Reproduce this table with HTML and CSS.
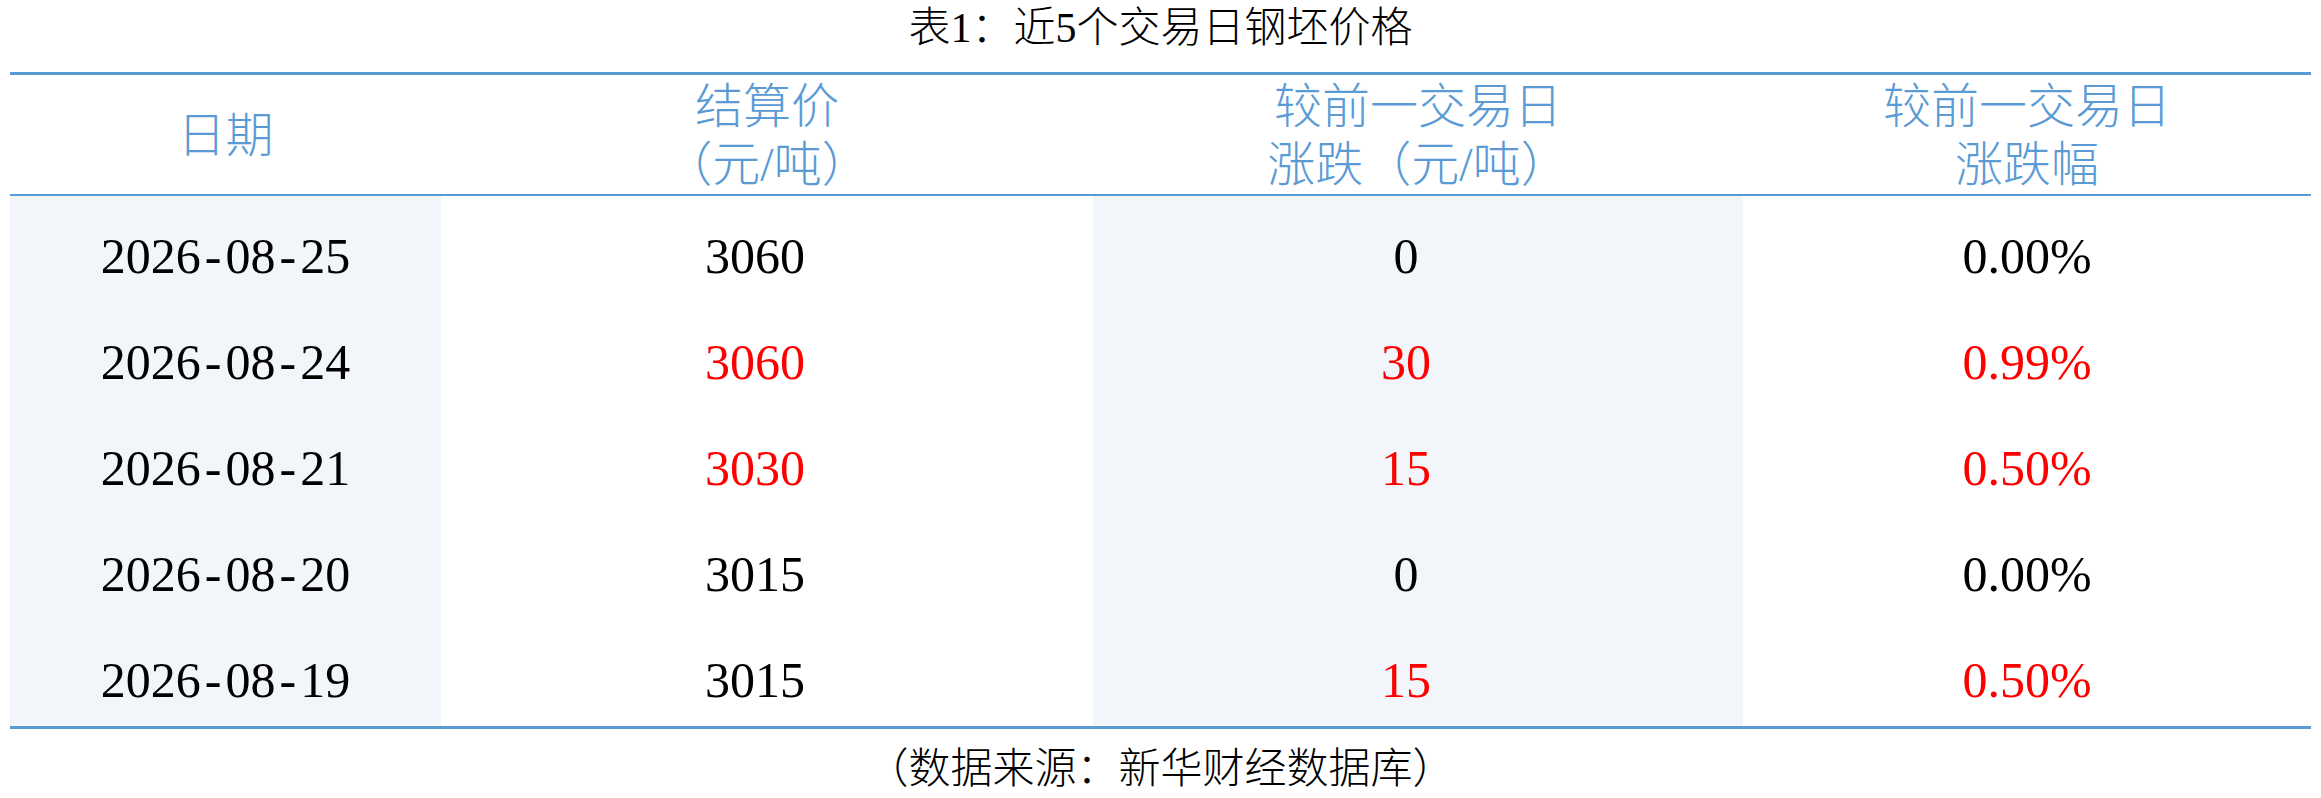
FILE: index.html
```html
<!DOCTYPE html>
<html lang="zh-CN">
<head>
<meta charset="utf-8">
<title>表1：近5个交易日钢坯价格</title>
<link rel="stylesheet" href="styles.css">
</head>
<body>
<div class="page">
  <div class="title">表1：近5个交易日钢坯价格</div>
  <div class="table">
    <div class="row head">
      <div class="cell">日期</div>
      <div class="cell">结算价<br>（元/吨）</div>
      <div class="cell">较前一交易日<br>涨跌（元/吨）</div>
      <div class="cell">较前一交易日<br>涨跌幅</div>
    </div>
    <div class="row">
      <div class="cell shade">2026<span class="dash">-</span>08<span class="dash">-</span>25</div>
      <div class="cell mid">3060</div>
      <div class="cell shade mid">0</div>
      <div class="cell">0.00%</div>
    </div>
    <div class="row">
      <div class="cell shade">2026<span class="dash">-</span>08<span class="dash">-</span>24</div>
      <div class="cell mid up">3060</div>
      <div class="cell shade mid up">30</div>
      <div class="cell up">0.99%</div>
    </div>
    <div class="row">
      <div class="cell shade">2026<span class="dash">-</span>08<span class="dash">-</span>21</div>
      <div class="cell mid up">3030</div>
      <div class="cell shade mid up">15</div>
      <div class="cell up">0.50%</div>
    </div>
    <div class="row">
      <div class="cell shade">2026<span class="dash">-</span>08<span class="dash">-</span>20</div>
      <div class="cell mid">3015</div>
      <div class="cell shade mid">0</div>
      <div class="cell">0.00%</div>
    </div>
    <div class="row">
      <div class="cell shade">2026<span class="dash">-</span>08<span class="dash">-</span>19</div>
      <div class="cell mid">3015</div>
      <div class="cell shade mid up">15</div>
      <div class="cell up">0.50%</div>
    </div>
  </div>
  <div class="source">（数据来源：新华财经数据库）</div>
</div>
</body>
</html>
```

FILE: styles.css
```css
html, body {
  margin: 0;
  padding: 0;
  background: #ffffff;
}

.page {
  margin: 0 10px;
  font-family: "Liberation Serif", "Noto Sans CJK SC", serif;
  color: #000000;
  text-spacing-trim: space-all;
  font-feature-settings: "halt" 0, "chws" 0;
}

.title {
  font-size: 42px;
  font-weight: 300;
  line-height: 56px;
  height: 72px;
  text-align: center;
}

.table {
  border-top: 3px solid #5b9bd5;
  border-bottom: 3px solid #5b9bd5;
}

.row {
  display: grid;
  grid-template-columns: 431px 652px 650px 1fr;
  height: 106px;
  box-sizing: border-box;
}

.cell {
  display: flex;
  align-items: center;
  justify-content: center;
  text-align: center;
  font-size: 50px;
  padding-top: 14px;
  box-sizing: border-box;
  white-space: pre;
}

.dash {
  margin: 0 4px;
}

.cell.shade {
  background: #f2f5fa;
}

.cell.mid {
  padding-right: 24px;
}

.cell.up {
  color: #ff0000;
}

.row.head {
  height: 121px;
  border-bottom: 2px solid #5b9bd5;
}

.row.head .cell {
  font-size: 48px;
  font-weight: 300;
  line-height: 58px;
  color: #5b9bd5;
  padding-top: 2px;
  white-space: normal;
}

.source {
  font-size: 42px;
  font-weight: 300;
  line-height: 56px;
  padding-top: 12px;
  text-align: center;
}
```
